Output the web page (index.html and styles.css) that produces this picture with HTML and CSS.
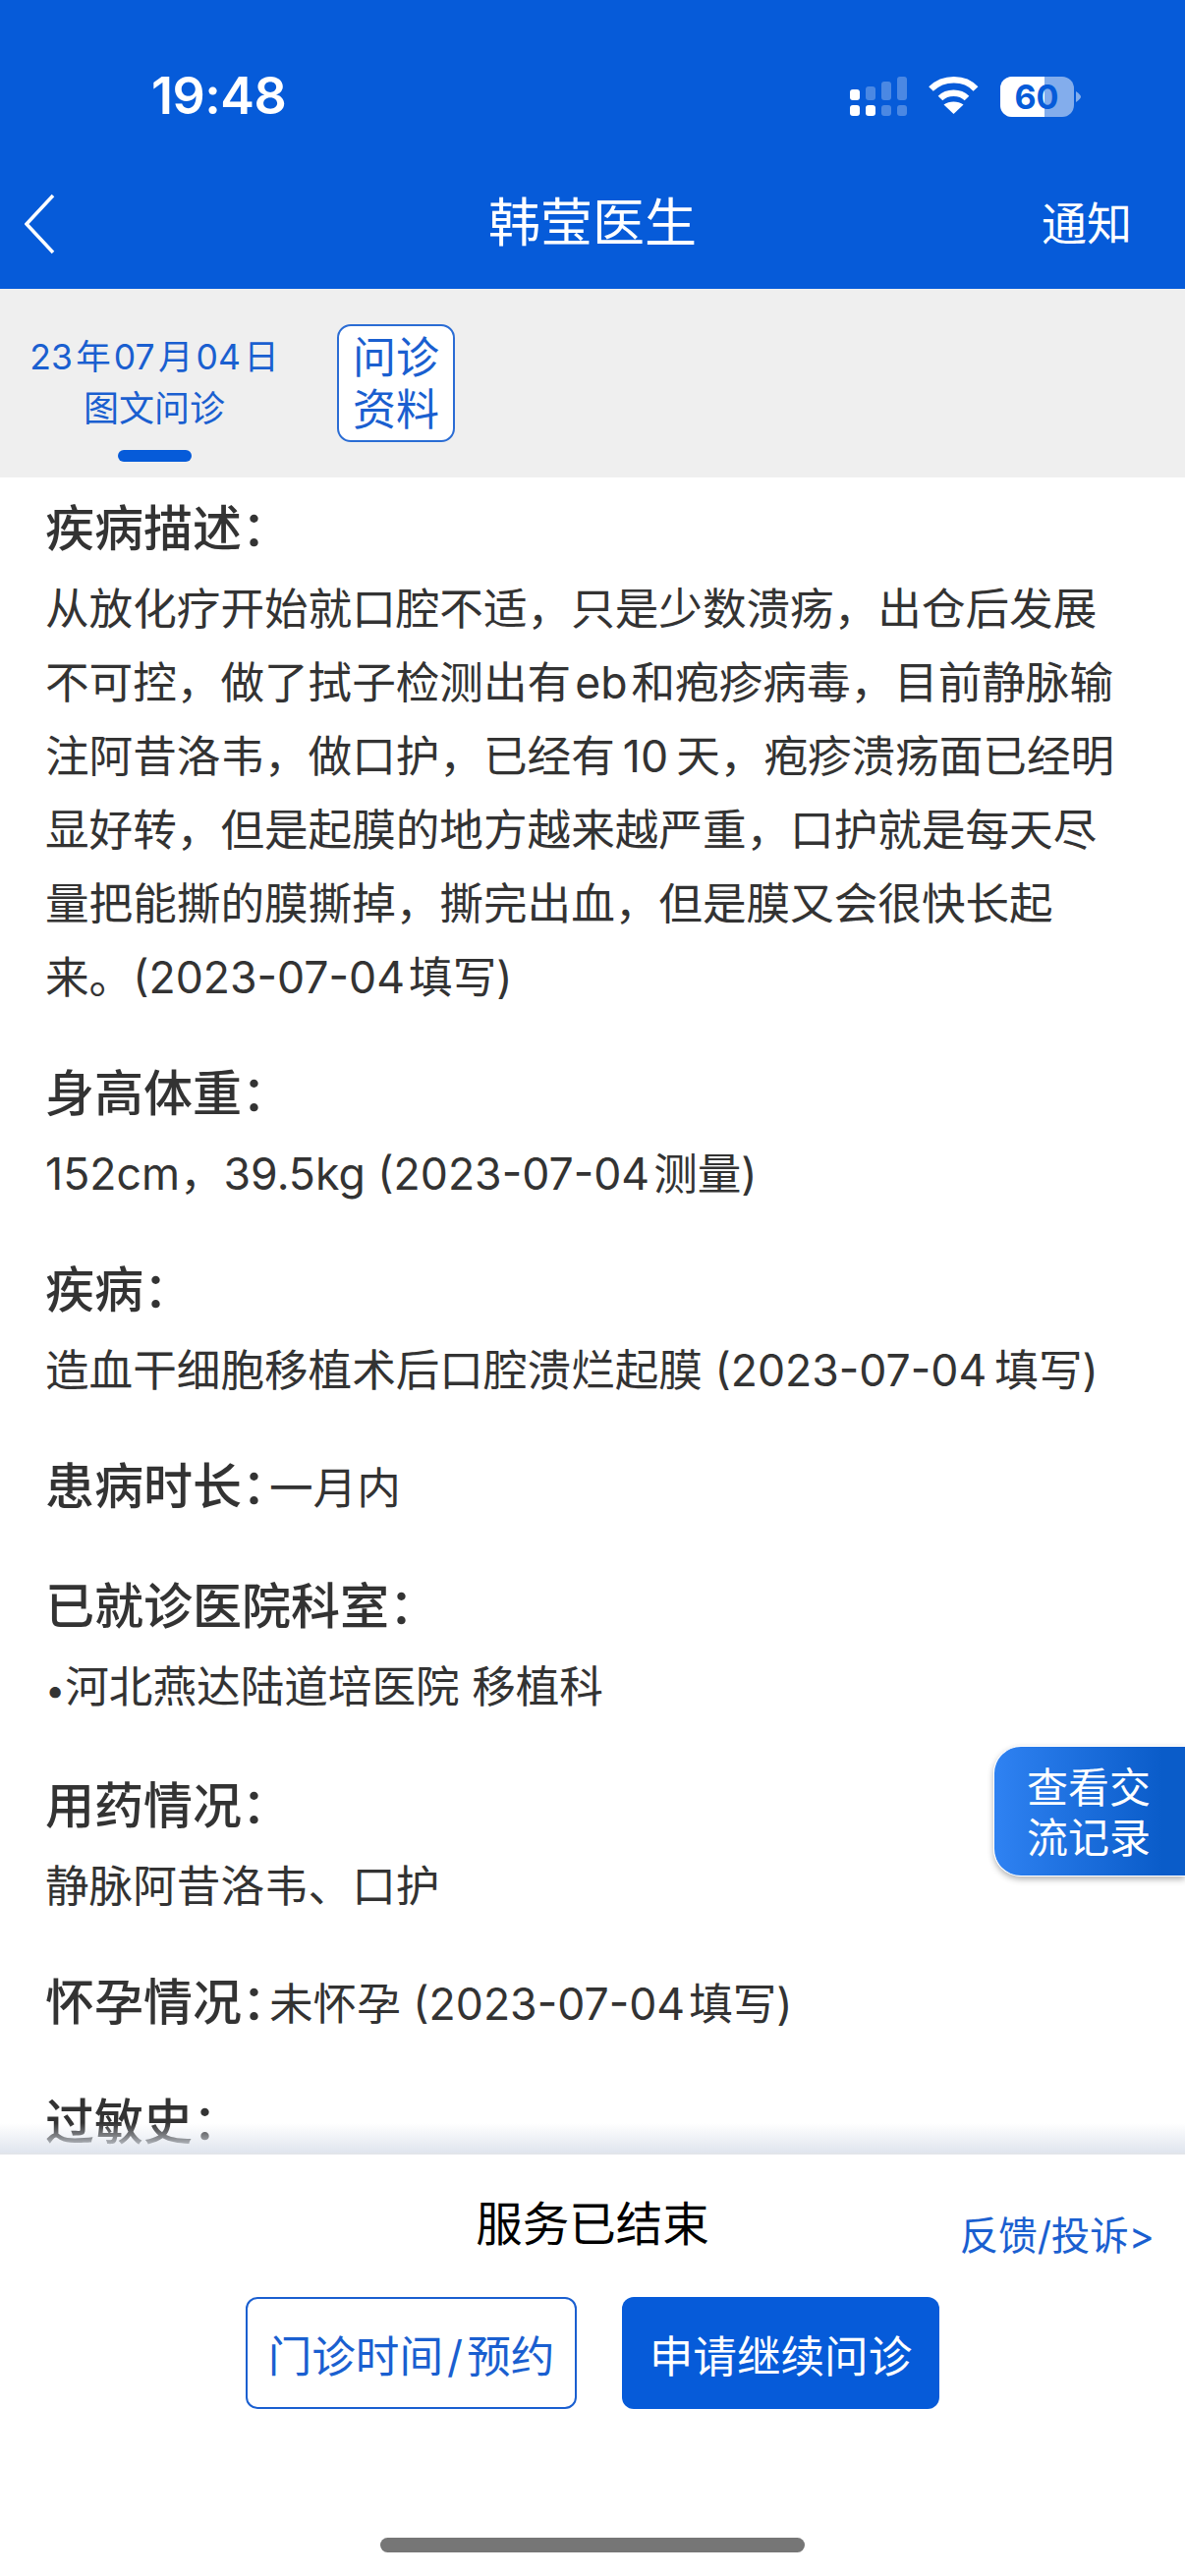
FILE: index.html
```html
<!DOCTYPE html>
<html lang="zh-CN">
<head>
    <meta charset="UTF-8">
    <meta name="viewport" content="width=device-width, initial-scale=1.0">
    <title>韩莹医生</title>
    <link rel="stylesheet" href="styles.css">
</head>
<body>
<div class="page">

    <header class="top">
        <div class="status-bar">
            <span class="time">19:48</span>
            <svg class="status-icons" width="240" height="44" viewBox="0 0 240 44">
                <!-- signal -->
                <g fill="#fff">
                    <rect x="5" y="15" width="10" height="11" rx="3"/>
                    <rect x="5" y="31" width="10" height="11" rx="3"/>
                    <rect x="21" y="31" width="10" height="11" rx="3"/>
                </g>
                <g fill="#fff" fill-opacity="0.28">
                    <rect x="21" y="12" width="10" height="14" rx="3"/>
                    <rect x="37" y="7" width="10" height="19" rx="3"/>
                    <rect x="53" y="2" width="10" height="24" rx="3"/>
                    <rect x="37" y="31" width="10" height="11" rx="3"/>
                    <rect x="53" y="31" width="10" height="11" rx="3"/>
                </g>
                <!-- wifi -->
                <g fill="none" stroke="#fff" stroke-width="6.5">
                    <path d="M87.5 14.5 C100 2 122 2 133 14.5"/>
                    <path d="M97 24 C104 17 117 17 124 24"/>
                </g>
                <path d="M110.5 40 L100.5 30.500 C106 26.500 115 26.500 120.500 30.500 Z" fill="#fff"/>
                <!-- battery -->
                <rect x="158" y="2" width="75" height="41" rx="12" fill="#fff" fill-opacity="0.5"/>
                <path d="M170 2 H203 V43 H170 A12 12 0 0 1 158 31 V14 A12 12 0 0 1 170 2 Z" fill="#fff"/>
                <path d="M235 17 C238 19 240 21 240 22.500 C240 24 238 26 235 28 Z" fill="#fff" fill-opacity="0.5"/>
                <text class="battery-num" x="195" y="35">60</text>
            </svg>
        </div>
        <nav class="nav-bar">
            <svg class="back-icon" width="34" height="62" viewBox="0 0 34 62">
                <path d="M29 2 L2 31 L29 60" fill="none" stroke="#fff" stroke-width="3.500"/>
            </svg>
            <h1 class="nav-title">韩莹医生</h1>
            <a class="nav-link">通知</a>
        </nav>
    </header>

    <div class="tabs">
        <div class="tab-active">
            <div class="tab-date">23&#8202;年&#8202;07&#8202;月&#8202;04&#8202;日</div>
            <div class="tab-name">图文问诊</div>
            <div class="tab-mark"></div>
        </div>
        <div class="tab-btn">问诊<br>资料</div>
    </div>

    <main class="content">
        <section class="item">
            <div class="label">疾病描述：</div>
            <p class="text">从放化疗开始就口腔不适，只是少数溃疡，出仓后发展不可控，做了拭子检测出有&#8202;eb&#8202;和疱疹病毒，目前静脉输注阿昔洛韦，做口护，已经有&thinsp;10&thinsp;天，疱疹溃疡面已经明显好转，但是起膜的地方越来越严重，口护就是每天尽量把能撕的膜撕掉，撕完出血，但是膜又会很快长起来。(2023-07-04&#8202;填写)</p>
        </section>
        <section class="item">
            <div class="label">身高体重：</div>
            <p class="text">152cm，39.5kg (2023-07-04&#8202;测量)</p>
        </section>
        <section class="item">
            <div class="label">疾病：</div>
            <p class="text">造血干细胞移植术后口腔溃烂起膜 (2023-07-04&thinsp;填写)</p>
        </section>
        <section class="item">
            <div class="label">患病时长<span class="colon">：</span><span class="value">一月内</span></div>
        </section>
        <section class="item">
            <div class="label">已就诊医院科室：</div>
            <p class="text"><span class="bullet">•</span>河北燕达陆道培医院 移植科</p>
        </section>
        <section class="item">
            <div class="label">用药情况：</div>
            <p class="text">静脉阿昔洛韦、口护</p>
        </section>
        <section class="item">
            <div class="label">怀孕情况<span class="colon">：</span><span class="value">未怀孕 (2023-07-04&#8202;填写)</span></div>
        </section>
        <section class="item">
            <div class="label">过敏史：</div>
        </section>
    </main>

    <!-- floating shortcut -->
    <a class="float-btn">查看交<br>流记录</a>

    <footer class="bottom">
        <div class="bottom-head">
            <span></span>
            <div class="bottom-title">服务已结束</div>
            <a class="feedback">反馈/投诉&gt;</a>
        </div>
        <div class="bottom-btns">
            <a class="btn btn-line">门诊时间&#8202;/&#8202;预约</a>
            <a class="btn btn-solid">申请继续问诊</a>
        </div>
        <div class="home-bar"></div>
    </footer>

</div>
</body>
</html>
```
FILE: styles.css
```css
* {
    box-sizing: border-box;
}

body {
    margin: 0;
    padding: 0;
    background-color: white;
    font-family: Inter, "Noto Sans CJK SC", sans-serif;
}

.page {
    position: relative;
    width: 1206px;
    height: 2622px;
    display: flex;
    flex-direction: column;
    overflow: hidden;
}

/* Blue header */
.top {
    height: 294px;
    background-color: #065bd9;
    color: white;
    flex-shrink: 0;
}

.status-bar {
    height: 170px;
    padding: 73px 0 0 154px;
    display: flex;
    justify-content: space-between;
    align-items: flex-start;
}

.time {
    font-size: 52px;
    font-weight: 600;
    line-height: 50px;
    letter-spacing: -0.5px;
}

.status-icons {
    margin: 3px 106px 0 0;
}

.battery-num {
    font-size: 34px;
    font-weight: 700;
    fill: #065bd9;
    text-anchor: middle;
}

.nav-bar {
    height: 124px;
    padding: 0 54px 0 25px;
    display: flex;
    justify-content: space-between;
    align-items: flex-start;
    position: relative;
}

.back-icon {
    margin-top: 27px;
}

.nav-title {
    position: absolute;
    left: 0;
    right: 0;
    top: 24px;
    margin: 0;
    text-align: center;
    font-size: 53px;
    font-weight: 400;
    line-height: 66px;
}

.nav-link {
    margin-top: 26px;
    font-size: 46px;
    line-height: 62px;
}

/* Tab strip */
.tabs {
    height: 192px;
    flex-shrink: 0;
    background-color: #efefef;
    color: #1a5fd0;
    display: flex;
    align-items: flex-start;
    padding: 36px 0 0 32px;
}

.tab-active {
    width: 250px;
    display: flex;
    flex-direction: column;
    align-items: center;
}

.tab-date {
    font-size: 35.5px;
    line-height: 50px;
    white-space: nowrap;
    margin-top: 9px;
}

.tab-name {
    font-size: 36px;
    line-height: 50px;
    margin-top: 2px;
}

.tab-mark {
    width: 75px;
    height: 12px;
    margin-top: 17px;
    border-radius: 6px;
    background-color: #065bd9;
}

.tab-btn {
    width: 120px;
    height: 120px;
    margin-left: 61px;
    border: 2px solid #2a6cd4;
    border-radius: 14px;
    background-color: white;
    font-size: 44px;
    line-height: 53px;
    text-align: center;
    padding-top: 6px;
}

/* Patient details */
.content {
    flex: 1;
    overflow: hidden;
    padding: 12px 55px 0 46px;
    color: #333;
}

.item {
    margin-bottom: 40px;
}

.label {
    font-size: 50px;
    font-weight: 500;
    line-height: 80px;
}

/* half width colon when a value follows on the same line */
.colon {
    font-feature-settings: "halt";
    margin-right: 3px;
}

.value {
    font-size: 44.6px;
    font-weight: 400;
}

.text {
    margin: 5px 0 0 0;
    font-size: 44.6px;
    line-height: 75px;
}

.bullet {
    font-size: 36px;
}

/* Shortcut on the right edge */
.float-btn {
    position: absolute;
    right: 0;
    top: 1777px;
    width: 195px;
    height: 133px;
    padding: 16px 0 0 33px;
    border: 1px solid white;
    border-right: none;
    border-radius: 28px 0 0 28px;
    background: linear-gradient(to right, #2f82f2, #0a5cc9 88%);
    box-shadow: 0 3px 6px rgba(0, 0, 0, 0.3);
    color: white;
    font-size: 42px;
    line-height: 51px;
}

/* Bottom panel */
.bottom {
    height: 431px;
    flex-shrink: 0;
    position: relative;
    background-color: white;
    border-top: 2px solid #e2e5ea;
    padding-top: 41px;
}

.bottom::before {
    content: "";
    position: absolute;
    left: 0;
    right: 0;
    top: -32px;
    height: 30px;
    background: linear-gradient(to bottom, rgba(224, 229, 238, 0), #e0e5ee);
}

.bottom-head {
    display: grid;
    grid-template-columns: 1fr auto 1fr;
    height: 60px;
}

.bottom-title {
    font-size: 47.5px;
    line-height: 60px;
    color: black;
}

.feedback {
    justify-self: end;
    padding: 12px 31px 0 0;
    font-size: 39.5px;
    line-height: 60px;
    color: #1a5fd0;
    white-space: nowrap;
}

.bottom-btns {
    display: flex;
    justify-content: center;
    gap: 46px;
    margin-top: 44px;
}

.btn {
    height: 114px;
    display: flex;
    justify-content: center;
    align-items: center;
    border-radius: 12px;
    font-size: 44.6px;
    white-space: nowrap;
}

.btn-line {
    width: 337px;
    border: 2px solid #1a5fd0;
    color: #1a5fd0;
}

.btn-solid {
    width: 323px;
    background-color: #065bd9;
    color: white;
}

.home-bar {
    width: 432px;
    height: 15px;
    margin: 131px auto 0;
    border-radius: 8px;
    background-color: #767676;
}
```
